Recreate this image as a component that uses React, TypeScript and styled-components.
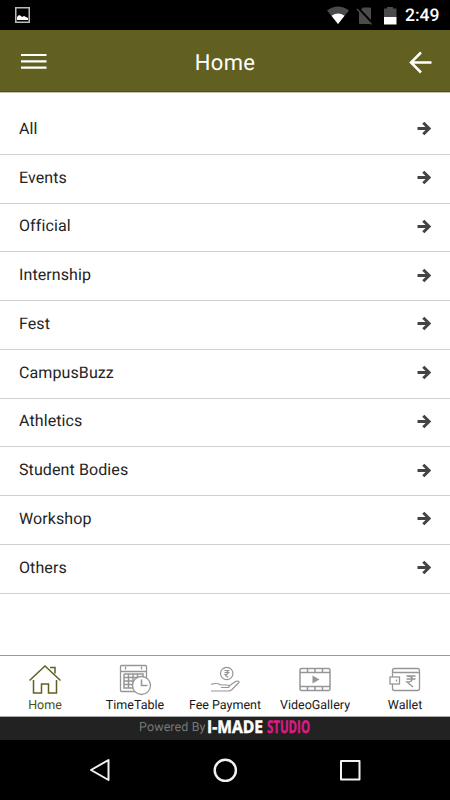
import React from "react";
import styled, { createGlobalStyle } from "styled-components";

const GlobalStyle = createGlobalStyle`
  * { box-sizing: border-box; }
  body { margin: 0; background: #fff; font-family: Roboto, sans-serif; }
  svg { display: block; flex: none; }
`;

const Screen = styled.div`
  width: 450px;
  height: 800px;
  display: flex;
  flex-direction: column;
  overflow: hidden;
  background: #fff;
  text-rendering: geometricPrecision;
`;

const StatusBar = styled.div`
  height: 30px;
  flex: none;
  display: flex;
  align-items: center;
  justify-content: space-between;
  padding: 0 10px 0 15px;
  background: #000;
`;

const StatusIcons = styled.div`
  display: flex;
  align-items: center;
`;

const Clock = styled.span`
  margin-left: 2px;
  color: #fff;
  font-size: 17.5px;
  font-weight: 500;
  line-height: 30px;
  padding-top: 1px;
  width: 35px;
  white-space: nowrap;
`;

const Header = styled.header`
  height: 63px;
  flex: none;
  display: grid;
  grid-template-columns: 60px 1fr 60px;
  align-items: center;
  padding: 1px 17px 0 20px;
  background: #616020;
  border-bottom: 1px solid #c2c1ae;
  box-shadow: inset 0 -1px #504f08;
`;

const BackButton = styled.div`
  justify-self: end;
`;

const Title = styled.h1`
  margin: 0;
  padding: 3px 3px 0 0;
  text-align: center;
  color: #fff;
  font-size: 22px;
  font-weight: 400;
  letter-spacing: 0.3px;
`;

const List = styled.ul`
  flex: 1;
  margin: 0;
  padding: 13px 0 0;
  list-style: none;
`;

const Row = styled.li`
  height: 48.75px;
  display: flex;
  align-items: center;
  justify-content: space-between;
  padding: 0 18px 2px 19px;
  border-bottom: 1px solid #d0d0d0;
  color: #242424;
  font-size: 16px;
  line-height: 20px;
  letter-spacing: 0.1px;
`;

const TabBar = styled.nav`
  height: 62px;
  flex: none;
  display: grid;
  grid-template-columns: repeat(5, 1fr);
  border-top: 1px solid #999;
  border-bottom: 1px solid #aaa;
`;

const Tab = styled.div<{ $active?: boolean }>`
  display: flex;
  flex-direction: column;
  align-items: center;
  padding-top: 7px;
  white-space: nowrap;
  color: ${(p) => (p.$active ? "#4f4e10" : "#181818")};
  font-size: 12.5px;
  line-height: 18px;
  letter-spacing: 0;

  svg {
    color: ${(p) => (p.$active ? "#626020" : "#969696")};
  }
`;

const Footer = styled.footer`
  height: 23px;
  flex: none;
  display: flex;
  align-items: flex-start;
  background: #222;
`;

const Credit = styled.span`
  width: 207px;
  padding-left: 139px;
  color: #777;
  font-size: 12.5px;
  line-height: 22px;
  white-space: nowrap;
  letter-spacing: 0.1px;
`;

const Wordmark = styled.svg`
  font-family: "Open Sans", sans-serif;
  font-weight: 700;
  letter-spacing: 0;
  overflow: visible;
`;

const SystemNav = styled.div`
  height: 60px;
  flex: none;
  display: grid;
  grid-template-columns: 25px 25px 25px;
  column-gap: 100px;
  justify-content: center;
  align-items: center;
  background: #000;
`;

const iconProps = {
  width: 34,
  height: 34,
  viewBox: "0 0 34 34",
  fill: "none",
  stroke: "currentColor",
  strokeWidth: 1.3,
};

const HomeIcon = () => (
  <svg {...iconProps} strokeWidth={1.5}>
    <path d="M1.5 17.5 17 3l15.500 14.500M5.500 17v13h8v-9h7v9h8V17M22 4.500h5v6" />
  </svg>
);

const TimetableIcon = () => (
  <svg {...iconProps}>
    <rect x="2.500" y="2.500" width="26" height="26" rx="1" />
    <path d="M2.500 8.500h26M7.500 3.500v3M23.500 3.500v3" />
    <path d="M6 11h19v6M6 11v14h11M6 14.500h18M6 18h13M6 21.500h10M10.500 11v14M15 11v14M19.500 11v7" strokeWidth="1.5" />
    <circle cx="23.500" cy="22.500" r="9" fill="#fff" />
    <path d="M23.500 16.500v6h6" strokeWidth="1.5" />
  </svg>
);

const FeeIcon = () => (
  <svg {...iconProps} strokeWidth={1.2}>
    <circle cx="18.700" cy="10.500" r="6.200" />
    <path d="M16.500 7.500h5M16.500 9.500h5M17 7.500c4 0 4 4 0 4l3 3" strokeWidth="1.200" />
    <path d="M3 22.500c5-1.800 7-1 10 .5h6c3 0 3 2.500 0 2.500h-6M21 24l6.500-4.500c2.500-1 4.500 0 3 1.500l-6.500 6.500c-1 1-2 1.500-4 1.500H3" transform="translate(0 -1)" />
  </svg>
);

const VideoIcon = () => (
  <svg {...iconProps} strokeWidth={1.5}>
    <rect x="2" y="5.500" width="30" height="22" rx="1.500" />
    <path d="M2 9.500h30M2 23.500h30M9.500 5.500v4M17 5.500v4M24.500 5.500v4M9.500 23.500v4M17 23.500v4M24.500 23.500v4" />
    <path d="M14.500 12.500v8l7-4z" fill="currentColor" stroke="none" />
  </svg>
);

const WalletIcon = () => (
  <svg {...iconProps}>
    <path d="M4.500 14V7.500q0-2 2-2h23q2 0 2 2v18q0 2-2 2h-23q-2 0-2-2V21" />
    <path d="M4.500 8q0 1.500 2 1.500h25" />
    <rect x="2" y="14" width="9.500" height="7" />
    <path d="M8.500 16.500v2" />
    <path d="M18.500 13h9M18.500 16h9M19 13c7 0 7 6 0 6l6 5" strokeWidth="1.400" />
  </svg>
);

const ArrowIcon = () => (
  <svg width="15" height="15" viewBox="0 0 15 15" fill="none" stroke="#444" strokeWidth="3">
    <path d="M.5 7.500h11.500M6.300 1.700l5.800 5.800-5.800 5.800" />
  </svg>
);

const categories = [
  "All", "Events", "Official", "Internship", "Fest",
  "CampusBuzz", "Athletics", "Student Bodies", "Workshop", "Others",
];

const tabs = [
  { label: "Home", Icon: HomeIcon },
  { label: "TimeTable", Icon: TimetableIcon },
  { label: "Fee Payment", Icon: FeeIcon },
  { label: "VideoGallery", Icon: VideoIcon },
  { label: "Wallet", Icon: WalletIcon },
];

export default function App() {
  return (
    <Screen>
      <GlobalStyle />
      <StatusBar>
        <svg width="15" height="16" viewBox="0 0 15 16">
          <rect x=".75" y=".75" width="13.500" height="14.500" fill="none" stroke="#bbb" strokeWidth="1.500" />
          <path d="M2 13V10l2-2 2 1 1 1 2-1 2 1 2 1v2z" fill="#fff" />
        </svg>
        <StatusIcons>
          <svg width="76" height="19" viewBox="0 0 76 19">
            <path d="M0 4.500Q11-3.500 22 4.500L11 18z" fill="#4b4b4b" />
            <path d="M4.500 9.800Q11 5 17.500 9.800L11 18z" fill="#fff" />
            <path d="M32 5v12q0 1 1 1h10.500zM34 3.500 36 1.500h7q1 0 1 1V14z" fill="#4b4b4b" />
            <path d="m30 3 14.500 15.500" stroke="#4b4b4b" strokeWidth="1.500" />
            <path d="M57 2.500h3V1h6v1.500h3.500V11H57z" fill="#4b4b4b" />
            <path d="M57 11h12.500v7.500H57z" fill="#fff" />
          </svg>
          <Clock>2:49</Clock>
        </StatusIcons>
      </StatusBar>
      <Header>
        <svg width="27" height="18" viewBox="0 0 27 18" stroke="#fff" strokeWidth="2.200">
          <path d="M1 2h25.500M1 8.300h25.500M1 14.600h25.500" />
        </svg>
        <Title>Home</Title>
        <BackButton>
          <svg width="24" height="24" viewBox="0 0 24 24" fill="none" stroke="#fff" strokeWidth="2.500">
            <path d="M12 2.500 2 12.500l10 10M2 12.500h20.500" />
          </svg>
        </BackButton>
      </Header>
      <List>
        {categories.map((name) => (
          <Row key={name}>
            {name}
            <ArrowIcon />
          </Row>
        ))}
      </List>
      <TabBar>
        {tabs.map(({ label, Icon }, i) => (
          <Tab key={label} $active={i === 0}>
            <Icon />
            {label}
          </Tab>
        ))}
      </TabBar>
      <Footer>
        <Credit>Powered By</Credit>
        <Wordmark width="106" height="23" viewBox="0 0 106 23">
          <text x="0" y="16" fontSize="17.500" fill="#fff" stroke="#fff" strokeWidth=".5" textLength="56" lengthAdjust="spacingAndGlyphs">I-MADE</text>
          <text x="60" y="16" fontSize="17.500" fill="#dc1b85" stroke="#dc1b85" strokeWidth=".4" textLength="43" lengthAdjust="spacingAndGlyphs">STUDIO</text>
        </Wordmark>
      </Footer>
      <SystemNav>
        <svg width="25" height="26" viewBox="0 0 25 26" fill="none" stroke="#f2f2f2" strokeWidth="2" strokeLinejoin="round">
          <path d="M20.500 3v20L3 13z" />
        </svg>
        <svg width="25" height="25" viewBox="0 0 25 25" fill="none" stroke="#f2f2f2" strokeWidth="2.400">
          <circle cx="12.300" cy="12.300" r="10.600" />
        </svg>
        <svg width="25" height="25" viewBox="0 0 25 25" fill="none" stroke="#f2f2f2" strokeWidth="2" strokeLinejoin="round">
          <rect x="3" y="3" width="18.500" height="18.500" />
        </svg>
      </SystemNav>
    </Screen>
  );
}
